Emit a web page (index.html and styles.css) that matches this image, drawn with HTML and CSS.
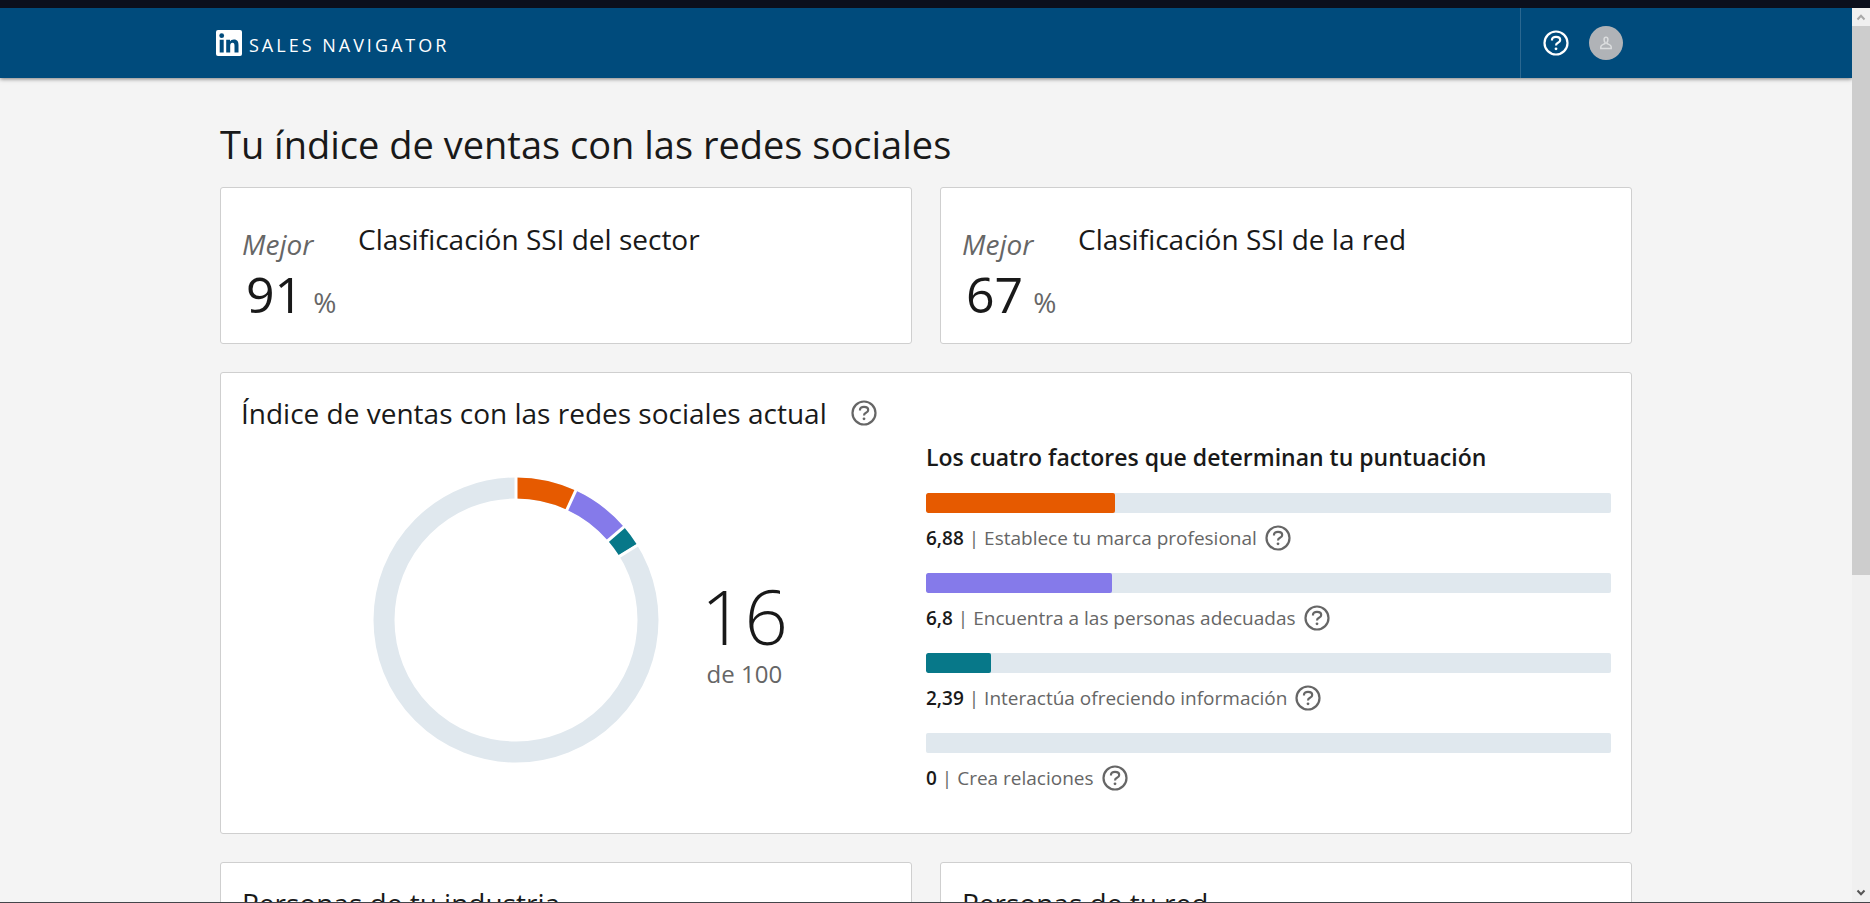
FILE: index.html
```html
<!DOCTYPE html>
<html lang="es">
<head>
<meta charset="utf-8">
<title>Sales Navigator</title>
<link rel="stylesheet" href="styles.css">
</head>
<body>
<svg class="defs" aria-hidden="true">
  <symbol id="help" viewBox="0 0 26 26">
    <circle cx="13" cy="13" r="11.5" fill="none" stroke="currentColor" stroke-width="2.200"/>
    <path d="M9 10.400V9.800c0-1.900 1.500-3 4-3s4.200 1.200 4.200 3.100c0 1.600-.9 2.300-2.200 2.900-1.300.6-2 1.200-2 2.700" fill="none" stroke="currentColor" stroke-width="2.200"/>
    <circle cx="13" cy="18.800" r="1.400" fill="currentColor"/>
  </symbol>
</svg>
<div class="frame-top"></div>
<div class="viewport">
  <div class="page">
    <header class="nav">
      <a class="brand" href="#">
        <svg class="brand-logo" viewBox="0 0 26 26" aria-hidden="true">
          <rect width="26" height="26" rx="2" fill="#fff"/>
          <circle cx="5.700" cy="5.700" r="2.400" fill="#004b7c"/>
          <path d="M3.700 9.800h4v12.700h-4zM10.200 9.800H14v1.700c.6-1.100 1.900-2 3.900-2 3.700 0 4.600 2.300 4.600 5.600v7.400h-4v-6.600c0-1.700-.2-3.200-2-3.200s-2.300 1.400-2.300 3.200v6.600h-4z" fill="#004b7c"/>
        </svg>
        <span class="brand-name">SALES NAVIGATOR</span>
      </a>
      <div class="nav-tools">
        <button class="help help-nav" aria-label="Ayuda"><svg><use href="#help"/></svg></button>
        <button class="avatar" aria-label="Perfil">
          <svg viewBox="0 0 14 14" aria-hidden="true"><path d="M7 1.200c1.200 0 1.900.9 1.900 2.200 0 1.100-.4 2.300-1 3.100v1c1.700.9 4.300 1.400 4.300 3.200v1.800H1.800v-1.800c0-1.800 2.600-2.300 4.300-3.200v-1c-.6-.8-1-2-1-3.100 0-1.300.7-2.200 1.900-2.200z" fill="none" stroke="#dcdedf" stroke-width="1.500"/></svg>
        </button>
      </div>
    </header>
    <main class="content">
      <h1>Tu índice de ventas con las redes sociales</h1>
      <div class="pair">
        <section class="card rank">
          <div class="rank-score">
            <em class="rank-top">Mejor</em>
            <p class="rank-value"><strong>91</strong><span>%</span></p>
          </div>
          <h2>Clasificación SSI del sector</h2>
        </section>
        <section class="card rank">
          <div class="rank-score">
            <em class="rank-top">Mejor</em>
            <p class="rank-value"><strong>67</strong><span>%</span></p>
          </div>
          <h2>Clasificación SSI de la red</h2>
        </section>
      </div>
      <section class="card index">
        <div class="index-chart">
          <div class="index-title">
            <h2>Índice de ventas con las redes sociales actual</h2>
            <button class="help" aria-label="Más información"><svg><use href="#help"/></svg></button>
          </div>
          <div class="score">
            <svg class="donut" viewBox="0 0 286 286" aria-hidden="true">
              <g fill="none" stroke-width="21" transform="rotate(-90 143 143)">
                <circle cx="143" cy="143" r="132" stroke="#e0e8ee"/>
                <circle cx="143" cy="143" r="132" stroke="#e65a00" pathLength="100" stroke-dasharray="6.88 93.12"/>
                <circle cx="143" cy="143" r="132" stroke="#857aea" pathLength="100" stroke-dasharray="6.8 93.2" stroke-dashoffset="-6.88"/>
                <circle cx="143" cy="143" r="132" stroke="#077889" pathLength="100" stroke-dasharray="2.39 97.61" stroke-dashoffset="-13.68"/>
              </g>
              <g stroke="#fff" stroke-width="3">
                <path d="M143 24V0"/>
                <path d="M143 24V0" transform="rotate(24.800 143 143)"/>
                <path d="M143 24V0" transform="rotate(49.200 143 143)"/>
                <path d="M143 24V0" transform="rotate(58.400 143 143)"/>
              </g>
            </svg>
            <p class="score-text"><strong>16</strong><span>de 100</span></p>
          </div>
        </div>
        <div class="factors">
          <h3>Los cuatro factores que determinan tu puntuación</h3>
          <ul>
            <li>
              <div class="bar"><div class="fill orange" style="width:27.52%"></div></div>
              <div class="factor"><p><b>6,88</b> | Establece tu marca profesional</p><button class="help" aria-label="Más información"><svg><use href="#help"/></svg></button></div>
            </li>
            <li>
              <div class="bar"><div class="fill purple" style="width:27.2%"></div></div>
              <div class="factor"><p><b>6,8</b> | Encuentra a las personas adecuadas</p><button class="help" aria-label="Más información"><svg><use href="#help"/></svg></button></div>
            </li>
            <li>
              <div class="bar"><div class="fill teal" style="width:9.56%"></div></div>
              <div class="factor"><p><b>2,39</b> | Interactúa ofreciendo información</p><button class="help" aria-label="Más información"><svg><use href="#help"/></svg></button></div>
            </li>
            <li>
              <div class="bar"><div class="fill" style="width:0%"></div></div>
              <div class="factor"><p><b>0</b> | Crea relaciones</p><button class="help" aria-label="Más información"><svg><use href="#help"/></svg></button></div>
            </li>
          </ul>
        </div>
      </section>
      <div class="pair">
        <section class="card people"><h2>Personas de tu industria</h2></section>
        <section class="card people"><h2>Personas de tu red</h2></section>
      </div>
    </main>
  </div>
  <div class="scrollbar" aria-hidden="true">
    <svg class="arrow up" viewBox="0 0 18 18"><path d="M5.500 11.500L9 7.800l3.500 3.700" fill="none" stroke="currentColor" stroke-width="2"/></svg>
    <div class="track"><div class="thumb"></div></div>
    <svg class="arrow" viewBox="0 0 18 18"><path d="M5.500 6.500L9 10.200l3.500-3.700" fill="none" stroke="currentColor" stroke-width="2"/></svg>
  </div>
</div>
<div class="frame-bottom"></div>
</body>
</html>
```
FILE: styles.css
```css
* { box-sizing: border-box; }
body {
  margin: 0;
  height: 100vh;
  display: flex;
  flex-direction: column;
  overflow: hidden;
  background: #f4f4f4;
  color: #191919;
  font-family: "Open Sans", "Noto Sans", sans-serif;
}
h1, h2, h3, p, ul { margin: 0; padding: 0; font-weight: 400; }
ul { list-style: none; }
button { padding: 0; border: 0; background: none; color: inherit; }
.defs { display: none; }

.frame-top { flex: none; height: 8px; background: #0b0f1c; }
.frame-bottom { flex: none; height: 1px; background: #44454a; }
.viewport { flex: 1; min-height: 0; display: flex; }
.page { flex: 1; min-width: 0; overflow: hidden; }

.nav {
  height: 70px;
  padding: 0 216px;
  display: flex;
  justify-content: space-between;
  background: #004b7c;
  box-shadow: 0 1px 4px rgba(0, 0, 0, .5);
  color: #fff;
}
.brand { display: flex; align-items: center; gap: 7px; color: #fff; text-decoration: none; }
.brand-logo { width: 26px; height: 26px; }
.brand-name { font-size: 18px; line-height: 24px; letter-spacing: 3px; padding-top: 4px; }
.nav-tools {
  display: flex;
  align-items: center;
  gap: 20px;
  padding: 0 13px 0 22px;
  border-left: 1px solid #2b6891;
}
.help { flex: none; width: 26px; height: 26px; color: #666; }
.help svg { display: block; width: 100%; height: 100%; }
.help-nav { color: #fff; }
.avatar {
  width: 34px;
  height: 34px;
  display: flex;
  align-items: center;
  justify-content: center;
  border-radius: 50%;
  background: #b0b3b7;
}
.avatar svg { width: 14px; height: 14px; }

.content { max-width: 1412px; margin: 0 auto; padding-top: 39px; }
h1 { font-size: 38px; line-height: 54px; margin-bottom: 16px; }
h2 { font-size: 28px; line-height: 40px; }
.card {
  background: #fff;
  border: 1px solid #cfcfcf;
  border-radius: 3px;
}
.pair { display: grid; grid-template-columns: 1fr 1fr; gap: 28px; }

.rank { padding: 31px 21px 6px; display: flex; }
.rank-score { width: 116px; white-space: nowrap; }
.rank-top { display: block; margin-top: 5px; font-size: 28px; line-height: 40px; color: #666; }
.rank-value { padding-left: 4px; line-height: 60px; }
.rank-value strong { margin-right: 10px; font-size: 50px; font-weight: 400; }
.rank-value span { font-size: 28px; color: #666; }

.index { margin: 28px 0; padding: 20px; display: grid; grid-template-columns: 685px 1fr; }
.index-title { display: flex; align-items: center; gap: 24px; white-space: nowrap; }
.score { display: flex; align-items: center; gap: 42px; padding: 44px 0 49px 132px; }
.donut { width: 286px; height: 286px; }
.score-text { display: flex; flex-direction: column; align-items: center; padding-top: 24px; }
.score-text strong { font-size: 76px; font-weight: 300; line-height: 84px; }
.score-text span { font-size: 24px; line-height: 32px; color: #666; }

.factors { padding-top: 48px; }
h3 { font-size: 23px; font-weight: 600; line-height: 32px; margin-bottom: 20px; white-space: nowrap; }
li { height: 80px; }
.bar { height: 20px; border-radius: 2px; background: #e0e8ee; overflow: hidden; }
.fill { height: 100%; border-radius: 2px; }
.orange { background: #e65a00; }
.purple { background: #857aea; }
.teal { background: #077889; }
.factor { display: flex; align-items: center; gap: 8px; padding-top: 12px; }
.factor p { font-size: 19px; line-height: 26px; color: #666; }
.factor b { font-weight: 600; color: #191919; }

.people { height: 300px; padding: 20px 21px; }

.scrollbar { flex: none; width: 18px; display: flex; flex-direction: column; background: #f0f0f0; }
.arrow { flex: none; width: 18px; height: 18px; color: #555; }
.arrow.up { color: #a8a8a8; }
.track { flex: 1; }
.thumb { height: 64%; background: #cdcdcd; }
```
